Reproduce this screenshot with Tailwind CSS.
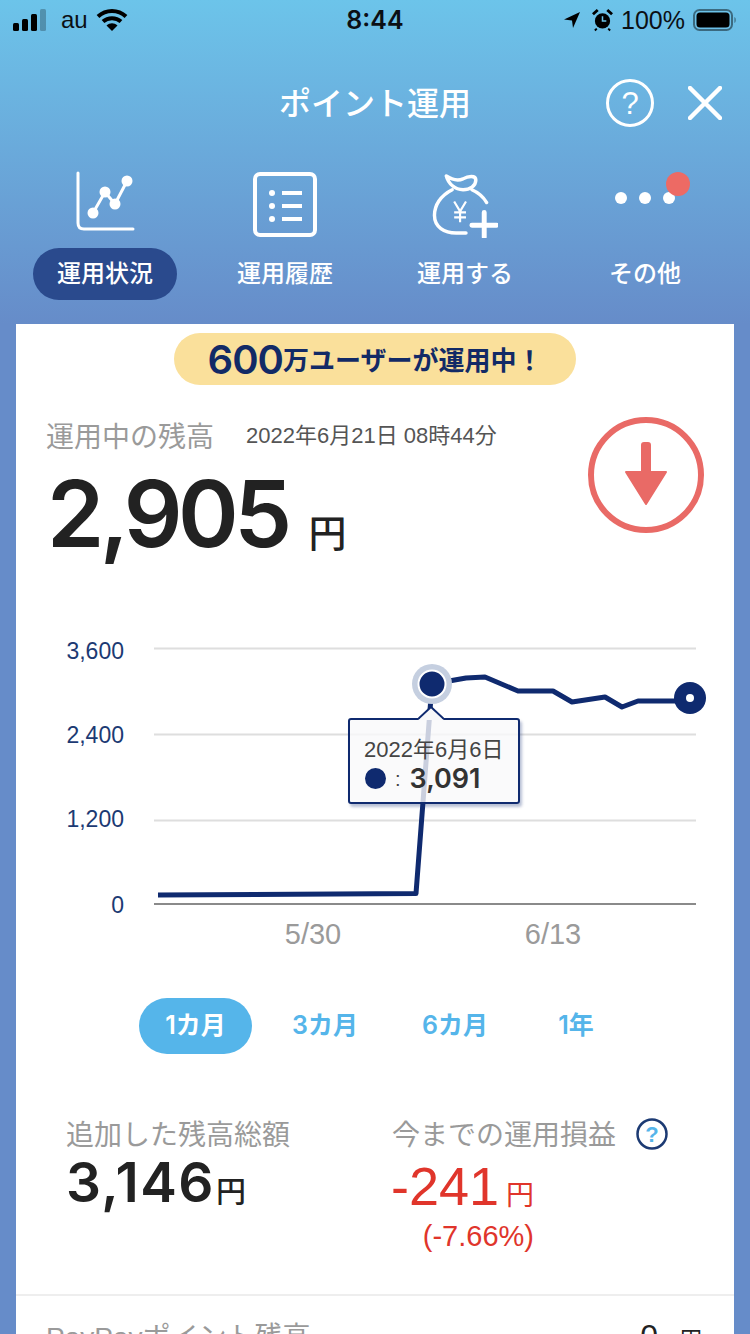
<!DOCTYPE html>
<html lang="ja">
<head>
<meta charset="UTF-8">
<meta name="viewport" content="width=device-width, initial-scale=1.0">
<title>ポイント運用</title>
<script src="https://cdn.jsdelivr.net/npm/@tailwindcss/browser@4"></script>
</head>
<body class="font-['Liberation_Sans','Noto_Sans_CJK_JP',sans-serif]">
<div class="w-[750px] h-[1334px] overflow-hidden bg-[#668cc9]">
  <!-- header -->
  <div class="h-[324px] bg-gradient-to-b from-[#6cc4ea] to-[#668cc9]">
    <!-- status bar -->
    <div class="h-[40px] flex items-center justify-between pl-[13px] pr-[13px] text-[#0b0f14]">
      <div class="flex items-center w-[200px]">
        <svg width="35" height="22" viewBox="0 0 35 22" fill="#000">
          <rect x="0" y="14" width="6" height="8" rx="1.5"/><rect x="9" y="10" width="6" height="12" rx="1.5"/><rect x="18" y="5" width="6" height="17" rx="1.5"/><rect x="27" y="0" width="6" height="22" rx="1.5" fill="#000" fill-opacity=".25"/>
        </svg>
        <span class="ml-[13px] text-[24px] leading-none">au</span>
        <svg class="ml-[8px]" width="32" height="24" viewBox="0 0 32 24">
          <path d="M2 8.5C10 1 22 1 30 8.5M7 13.5C12 9 20 9 25 13.500" fill="none" stroke="#000" stroke-width="4"/>
          <path d="M10.5 17.5C14 14.5 18 14.5 21.500 17.500L16 23Z" fill="#000"/>
        </svg>
      </div>
      <div class="text-[25px] font-semibold font-['Inter'] leading-none">8:44</div>
      <div class="flex items-center justify-end w-[200px]">
        <svg width="18" height="18" viewBox="0 0 18 18"><path d="M17 1L1 8.5L9 9.5L10 17Z" fill="#000"/></svg>
        <svg class="ml-[11px]" width="21" height="24" viewBox="0 0 22 24">
          <circle cx="11" cy="13" r="8" fill="#000"/><path d="M1 6L6 1.5M21 6L16 1.5" stroke="#000" stroke-width="3"/><path d="M11 8V13H15" fill="none" stroke="#6cc4ea" stroke-width="1.6"/><path d="M5 21L3 23M17 21L19 23" stroke="#000" stroke-width="2"/>
        </svg>
        <span class="ml-[8px] text-[25px] leading-none">100%</span>
        <svg class="ml-[8px]" width="44" height="24" viewBox="0 0 44 24">
          <rect x="1" y="2" width="38" height="20" rx="5.5" fill="none" stroke="#000" stroke-opacity=".45" stroke-width="2"/>
          <rect x="3.5" y="4.5" width="33" height="15" rx="3.5" fill="#000"/>
          <path d="M41.500 9C43 9.500 43 14.500 41.500 15Z" fill="#000" fill-opacity=".5"/>
        </svg>
      </div>
    </div>
    <!-- title -->
    <div class="relative h-[74px] mt-[27px] flex items-center justify-center">
      <h1 class="text-[32px] font-medium text-white leading-none">ポイント運用</h1>
      <div class="absolute right-[28px] top-[12px] flex items-center gap-[34px]">
        <svg width="48" height="48" viewBox="0 0 48 48"><circle cx="24" cy="24" r="22.500" fill="none" stroke="#fff" stroke-width="3"/><text x="24" y="35" text-anchor="middle" font-size="31" fill="#fff">?</text></svg>
        <svg width="34" height="34" viewBox="0 0 34 34"><path d="M2 2L32 32M32 2L2 32" stroke="#fff" stroke-width="4.500" stroke-linecap="round"/></svg>
      </div>
    </div>
    <!-- tabs -->
    <div class="flex mt-[30px] px-[15px] text-white">
      <div class="w-[180px] flex flex-col items-center">
        <svg width="60" height="60" viewBox="0 0 60 60" fill="#fff">
          <path d="M3 2V52Q3 58 9 58H58" fill="none" stroke="#fff" stroke-width="3" stroke-linecap="round"/>
          <path d="M18 42L30 21L40 33L52 10" fill="none" stroke="#fff" stroke-width="3"/>
          <circle cx="18" cy="42" r="5.500"/><circle cx="30" cy="21" r="5.500"/><circle cx="40" cy="33" r="5.500"/><circle cx="52" cy="10" r="5.500"/>
        </svg>
        <div class="mt-[17px] w-[144px] h-[52px] rounded-[26px] bg-[#2a4a8d] flex items-center justify-center text-[24px] font-medium">運用状況</div>
      </div>
      <div class="w-[180px] flex flex-col items-center">
        <svg class="mt-[1px]" width="64" height="66" viewBox="0 0 64 66">
          <rect x="2" y="2" width="60" height="61" rx="5" fill="none" stroke="#fff" stroke-width="4"/>
          <circle cx="19" cy="21" r="3" fill="#fff"/><circle cx="19" cy="34" r="3" fill="#fff"/><circle cx="19" cy="47" r="3" fill="#fff"/>
          <path d="M29 21H49M29 34H49M29 47H49" stroke="#fff" stroke-width="4"/>
        </svg>
        <div class="mt-[10px] h-[52px] flex items-center text-[24px] font-medium">運用履歴</div>
      </div>
      <div class="w-[180px] flex flex-col items-center">
        <svg class="mt-[1px]" width="66" height="66" viewBox="0 0 66 67">
          <path d="M14 4C20 8 26 9 31 7C36 4 44 3 44 8C44 14 38 18 31 18C23 18 16 12 14 4Z" fill="none" stroke="#fff" stroke-width="3.500" stroke-linejoin="round"/>
          <path d="M20 18C8 24 2 34 2 44C2 56 12 62 24 62H34M40 18C47 21 52 26 55 31" fill="none" stroke="#fff" stroke-width="3.500" stroke-linecap="round"/>
          <path d="M22 30L28 40L34 30M28 40V51M22 41H34M22 46H34" fill="none" stroke="#fff" stroke-width="2.200"/>
          <path d="M40 54H65M52.500 41V66" stroke="#fff" stroke-width="5" stroke-linecap="round"/>
        </svg>
        <div class="mt-[10px] h-[52px] flex items-center text-[24px] font-medium">運用する</div>
      </div>
      <div class="w-[180px] flex flex-col items-center relative">
        <div class="h-[67px] flex items-center gap-[12px] pb-[13px]">
          <span class="w-[12px] h-[12px] rounded-full bg-white"></span>
          <span class="w-[12px] h-[12px] rounded-full bg-white"></span>
          <span class="w-[12px] h-[12px] rounded-full bg-white"></span>
        </div>
        <span class="absolute left-[111px] top-[1px] w-[24px] h-[24px] rounded-full bg-[#ed6a64]"></span>
        <div class="mt-[10px] h-[52px] flex items-center text-[24px] font-medium">その他</div>
      </div>
    </div>
  </div>

  <!-- card -->
  <div class="mx-[16px] w-[718px] h-[1010px] bg-white">
    <div class="flex justify-center pt-[9px]">
      <div class="w-[402px] h-[52px] rounded-[26px] bg-[#fae09b] flex items-center justify-center text-[#122a66] font-bold leading-none">
        <span class="mt-[2px] text-[40px] font-semibold font-['Inter'] tracking-[-1px]">600</span><span class="mt-[4px] text-[26px]">万ユーザーが運用中！</span>
      </div>
    </div>

    <div class="relative h-[240px]">
      <div class="flex items-center pt-[39px] pl-[30px]">
        <span class="text-[28px] text-[#9a9a9a] leading-none">運用中の残高</span>
        <span class="ml-[32px] mb-[4px] text-[22px] text-[#555] leading-none">2022年6月21日 08時44分</span>
      </div>
      <div class="flex items-baseline pl-[31px] mt-[16px] text-[#222]">
        <span class="text-[92px] font-semibold font-['Inter'] tracking-[-4.5px] leading-none">2,905</span>
        <span class="ml-[21px] text-[38px] font-medium leading-none">円</span>
      </div>
      <svg class="absolute left-[572px] top-[32px]" width="116" height="116" viewBox="0 0 116 116">
        <circle cx="58" cy="58" r="55" fill="none" stroke="#e96a66" stroke-width="6"/>
        <path d="M54 28Q54 26 56 26H60Q62 26 62 28V55H78L58 87L38 55H54Z" fill="#e96a66" stroke="#e96a66" stroke-width="2" stroke-linejoin="round"/>
      </svg>
    </div>

    <!-- chart -->
    <div class="relative h-[364px]">
      <svg class="absolute left-0 top-0" width="718" height="364" viewBox="16 625 718 364">
        <path d="M154 648.500H696M154 734.500H696M154 820.500H696" stroke="#dedede" stroke-width="2"/>
        <path d="M154 904H696" stroke="#8a8a8a" stroke-width="2"/>
        <g font-size="23" fill="#1c3a73" text-anchor="end">
          <text x="124" y="659">3,600</text><text x="124" y="743">2,400</text><text x="124" y="827">1,200</text><text x="124" y="913">0</text>
        </g>
        <g font-size="29" fill="#9a9a9a" text-anchor="middle">
          <text x="313" y="944">5/30</text><text x="553" y="944">6/13</text>
        </g>
        <path d="M158 895L416 893.500L432 684M432 684L466 678L485 677L518 691L553 691L572 702L605 697L622 707L638 701L690 701" fill="none" stroke="#0f2a6f" stroke-width="5" stroke-linejoin="round"/>
        <circle cx="432" cy="684" r="20" fill="#c5cfe0"/>
        <circle cx="432" cy="684" r="13.500" fill="#0f2a6f" stroke="#fff" stroke-width="2"/>
        <circle cx="690" cy="698" r="16" fill="#0f2a6f"/>
        <circle cx="690" cy="698" r="4" fill="#fff"/>
      </svg>
      <!-- tooltip -->
      <div class="absolute left-[332px] top-[93px] w-[172px] h-[86px] bg-[#f9f9fa]/80 border-2 border-[#0f2a6f] rounded-[3px] shadow-[2px_3px_3px_rgba(15,42,111,0.3)] pl-[14px] pt-[19px]">
        <svg class="absolute left-[68px] top-[-13px]" width="26" height="13" viewBox="0 0 26 13"><path d="M0 13L13 0L26 13Z" fill="#f7f7f8"/><path d="M0 12L13 0L26 12" fill="none" stroke="#0f2a6f" stroke-width="2"/></svg>
        <div class="text-[22px] leading-none text-[#444]">2022年6月6日</div>
        <div class="flex items-center mt-[4px] leading-none">
          <span class="ml-[1px] w-[21px] h-[21px] rounded-full bg-[#0f2a6f]"></span>
          <span class="ml-[9px] text-[20px] text-[#444]">:</span>
          <span class="ml-[9px] text-[27px] font-semibold font-['Inter'] text-[#333]">3,091</span>
        </div>
      </div>
    </div>

    <!-- range -->
    <div class="flex items-center pl-[123px] mt-[9px] text-[25px] font-semibold font-['Inter','Noto_Sans_CJK_JP'] text-[#55b5ea]">
      <div class="w-[113px] h-[56px] rounded-[28px] bg-[#55b5ea] text-white flex items-center justify-center">1カ月</div>
      <div class="w-[130px] ml-[8px] text-center">3カ月</div>
      <div class="w-[130px] text-center">6カ月</div>
      <div class="w-[112px] text-center">1年</div>
    </div>

    <!-- totals -->
    <div class="flex h-[242px] pt-[68px] border-b-2 border-[#eeeeee]">
      <div class="w-[326px] pl-[50px]">
        <div class="text-[28px] text-[#9a9a9a] leading-none">追加した残高総額</div>
        <div class="flex items-baseline text-[#222] leading-none mt-[5px]">
          <span class="text-[55px] font-semibold font-['Inter'] tracking-[1.5px]">3,146</span><span class="ml-[1px] text-[30px] font-medium">円</span>
        </div>
      </div>
      <div class="flex-1 pl-[50px]">
        <div class="flex items-center leading-none mt-[-4px]">
          <span class="mt-[4px] text-[28px] text-[#9a9a9a]">今までの運用損益</span>
          <svg class="ml-[20px]" width="32" height="32" viewBox="0 0 32 32"><circle cx="16" cy="16" r="14.500" fill="none" stroke="#1c3a73" stroke-width="2.500"/><text x="16" y="24" text-anchor="middle" font-size="22" font-weight="bold" fill="#55b5ea">?</text></svg>
        </div>
        <div class="flex items-baseline text-[#e0352b] leading-none mt-[9px]">
          <span class="text-[54px] ml-[-1px]">-241</span><span class="ml-[7px] text-[28px]">円</span>
        </div>
        <div class="w-[142px] text-right text-[29px] text-[#e0352b] leading-none mt-[9px]">(-7.66%)</div>
      </div>
    </div>

    <!-- point balance -->
    <div class="flex items-baseline justify-between pt-[24px] pl-[30px] pr-[32px] leading-none">
      <span class="text-[28px] text-[#9a9a9a]">PayPayポイント残高</span>
      <span class="text-[#222]"><span class="text-[32px]">0</span><span class="ml-[22px] text-[22px]">円</span></span>
    </div>
  </div>
</div>
</body>
</html>
